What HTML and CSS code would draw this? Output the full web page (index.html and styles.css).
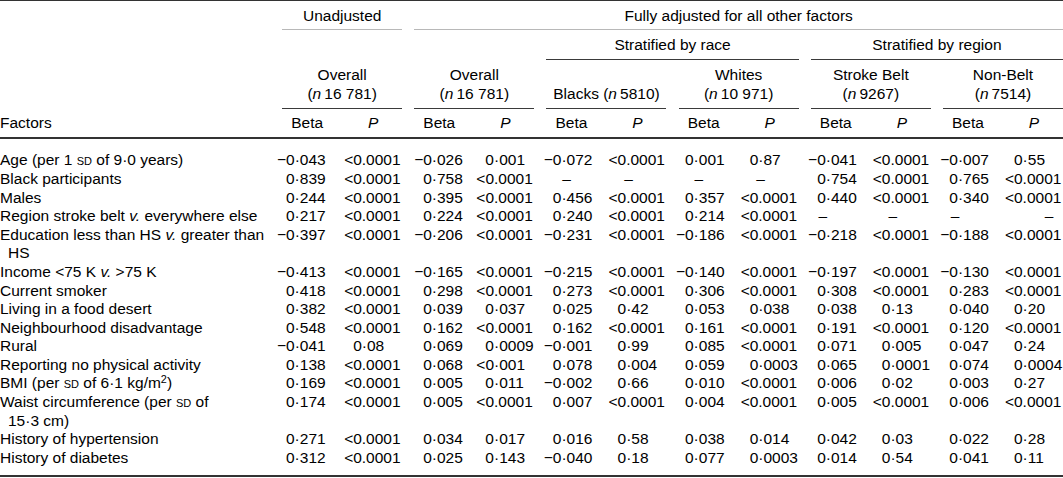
FILE: index.html
```html
<!DOCTYPE html>
<html lang="en">
<head>
<meta charset="utf-8">
<title>Factors table</title>
<link rel="stylesheet" href="styles.css">
</head>
<body>
<table class="tbl">
  <colgroup>
    <col class="c-f">
    <col class="c-b"><col class="c-p">
    <col class="c-b"><col class="c-p">
    <col class="c-b"><col class="c-p">
    <col class="c-b"><col class="c-p">
    <col class="c-b"><col class="c-p">
    <col class="c-b"><col class="c-p">
  </colgroup>
  <thead>
    <tr class="h1">
      <th></th>
      <th colspan="2"><div class="rule">Unadjusted</div></th>
      <th colspan="10"><div class="rule">Fully adjusted for all other factors</div></th>
    </tr>
    <tr class="h2">
      <th></th>
      <th colspan="2"></th>
      <th colspan="2"></th>
      <th colspan="4"><div class="rule">Stratified by race</div></th>
      <th colspan="4"><div class="rule">Stratified by region</div></th>
    </tr>
    <tr class="h3">
      <th></th>
      <th colspan="2"><div class="rule">Overall<br>(<i>n</i>&#8201;16 781)</div></th>
      <th colspan="2"><div class="rule">Overall<br>(<i>n</i>&#8201;16 781)</div></th>
      <th colspan="2"><div class="rule">Blacks (<i>n</i>&#8201;5810)</div></th>
      <th colspan="2"><div class="rule">Whites<br>(<i>n</i>&#8201;10 971)</div></th>
      <th colspan="2"><div class="rule">Stroke Belt<br>(<i>n</i>&#8201;9267)</div></th>
      <th colspan="2"><div class="rule">Non-Belt<br>(<i>n</i>&#8201;7514)</div></th>
    </tr>
    <tr class="h4">
      <th class="hf">Factors</th>
      <th class="hb">Beta</th><th class="hp"><i>P</i></th>
      <th class="hb">Beta</th><th class="hp"><i>P</i></th>
      <th class="hb">Beta</th><th class="hp"><i>P</i></th>
      <th class="hb">Beta</th><th class="hp"><i>P</i></th>
      <th class="hb">Beta</th><th class="hp"><i>P</i></th>
      <th class="hb">Beta</th><th class="hp"><i>P</i></th>
    </tr>
  </thead>
  <tbody>
    <tr>
      <td class="f">Age (per 1 <span class="sc">sd</span> of 9·0 years)</td>
      <td class="b">−0·043</td><td class="p"><span class="i">&lt;0</span>.0001</td>
      <td class="b">−0·026</td><td class="p"><span class="i">0</span>·001</td>
      <td class="b">−0·072</td><td class="p"><span class="i">&lt;0</span>.0001</td>
      <td class="b">0·001</td><td class="p"><span class="i">0</span>·87</td>
      <td class="b">−0·041</td><td class="p"><span class="i">&lt;0</span>.0001</td>
      <td class="b">−0·007</td><td class="p"><span class="i">0</span>·55</td>
    </tr>
    <tr>
      <td class="f">Black participants</td>
      <td class="b">0·839</td><td class="p"><span class="i">&lt;0</span>.0001</td>
      <td class="b">0·758</td><td class="p"><span class="i">&lt;0</span>.0001</td>
      <td class="b na1">–</td><td class="p na1">–</td>
      <td class="b na1">–</td><td class="p na1">–</td>
      <td class="b">0·754</td><td class="p"><span class="i">&lt;0</span>.0001</td>
      <td class="b">0·765</td><td class="p"><span class="i">&lt;0</span>.0001</td>
    </tr>
    <tr>
      <td class="f">Males</td>
      <td class="b">0·244</td><td class="p"><span class="i">&lt;0</span>.0001</td>
      <td class="b">0·395</td><td class="p"><span class="i">&lt;0</span>.0001</td>
      <td class="b">0·456</td><td class="p"><span class="i">&lt;0</span>.0001</td>
      <td class="b">0·357</td><td class="p"><span class="i">&lt;0</span>.0001</td>
      <td class="b">0·440</td><td class="p"><span class="i">&lt;0</span>.0001</td>
      <td class="b">0·340</td><td class="p"><span class="i">&lt;0</span>.0001</td>
    </tr>
    <tr>
      <td class="f">Region stroke belt <i>v.</i> everywhere else</td>
      <td class="b">0·217</td><td class="p"><span class="i">&lt;0</span>.0001</td>
      <td class="b">0·224</td><td class="p"><span class="i">&lt;0</span>.0001</td>
      <td class="b">0·240</td><td class="p"><span class="i">&lt;0</span>.0001</td>
      <td class="b">0·214</td><td class="p"><span class="i">&lt;0</span>.0001</td>
      <td class="b na2">–</td><td class="p na1">–</td>
      <td class="b na2">–</td><td class="p na2">–</td>
    </tr>
    <tr>
      <td class="f">Education less than HS <i>v.</i> greater than<br>HS</td>
      <td class="b">−0·397</td><td class="p"><span class="i">&lt;0</span>.0001</td>
      <td class="b">−0·206</td><td class="p"><span class="i">&lt;0</span>.0001</td>
      <td class="b">−0·231</td><td class="p"><span class="i">&lt;0</span>.0001</td>
      <td class="b">−0·186</td><td class="p"><span class="i">&lt;0</span>.0001</td>
      <td class="b">−0·218</td><td class="p"><span class="i">&lt;0</span>.0001</td>
      <td class="b">−0·188</td><td class="p"><span class="i">&lt;0</span>.0001</td>
    </tr>
    <tr>
      <td class="f">Income &lt;75 K <i>v.</i> &gt;75 K</td>
      <td class="b">−0·413</td><td class="p"><span class="i">&lt;0</span>.0001</td>
      <td class="b">−0·165</td><td class="p"><span class="i">&lt;0</span>.0001</td>
      <td class="b">−0·215</td><td class="p"><span class="i">&lt;0</span>.0001</td>
      <td class="b">−0·140</td><td class="p"><span class="i">&lt;0</span>.0001</td>
      <td class="b">−0·197</td><td class="p"><span class="i">&lt;0</span>.0001</td>
      <td class="b">−0·130</td><td class="p"><span class="i">&lt;0</span>.0001</td>
    </tr>
    <tr>
      <td class="f">Current smoker</td>
      <td class="b">0·418</td><td class="p"><span class="i">&lt;0</span>.0001</td>
      <td class="b">0·298</td><td class="p"><span class="i">&lt;0</span>.0001</td>
      <td class="b">0·273</td><td class="p"><span class="i">&lt;0</span>.0001</td>
      <td class="b">0·306</td><td class="p"><span class="i">&lt;0</span>.0001</td>
      <td class="b">0·308</td><td class="p"><span class="i">&lt;0</span>.0001</td>
      <td class="b">0·283</td><td class="p"><span class="i">&lt;0</span>.0001</td>
    </tr>
    <tr>
      <td class="f">Living in a food desert</td>
      <td class="b">0·382</td><td class="p"><span class="i">&lt;0</span>.0001</td>
      <td class="b">0·039</td><td class="p"><span class="i">0</span>·037</td>
      <td class="b">0·025</td><td class="p"><span class="i">0</span>·42</td>
      <td class="b">0·053</td><td class="p"><span class="i">0</span>·038</td>
      <td class="b">0·038</td><td class="p"><span class="i">0</span>·13</td>
      <td class="b">0·040</td><td class="p"><span class="i">0</span>·20</td>
    </tr>
    <tr>
      <td class="f">Neighbourhood disadvantage</td>
      <td class="b">0·548</td><td class="p"><span class="i">&lt;0</span>.0001</td>
      <td class="b">0·162</td><td class="p"><span class="i">&lt;0</span>.0001</td>
      <td class="b">0·162</td><td class="p"><span class="i">&lt;0</span>.0001</td>
      <td class="b">0·161</td><td class="p"><span class="i">&lt;0</span>.0001</td>
      <td class="b">0·191</td><td class="p"><span class="i">&lt;0</span>.0001</td>
      <td class="b">0·120</td><td class="p"><span class="i">&lt;0</span>.0001</td>
    </tr>
    <tr>
      <td class="f">Rural</td>
      <td class="b">−0·041</td><td class="p"><span class="i">0</span>·08</td>
      <td class="b">0·069</td><td class="p"><span class="i">0</span>·0009</td>
      <td class="b">−0·001</td><td class="p"><span class="i">0</span>·99</td>
      <td class="b">0·085</td><td class="p"><span class="i">&lt;0</span>.0001</td>
      <td class="b">0·071</td><td class="p"><span class="i">0</span>·005</td>
      <td class="b">0·047</td><td class="p"><span class="i">0</span>·24</td>
    </tr>
    <tr>
      <td class="f">Reporting no physical activity</td>
      <td class="b">0·138</td><td class="p"><span class="i">&lt;0</span>.0001</td>
      <td class="b">0·068</td><td class="p"><span class="i">&lt;0</span>·001</td>
      <td class="b">0·078</td><td class="p"><span class="i">0</span>·004</td>
      <td class="b">0·059</td><td class="p"><span class="i">0</span>·0003</td>
      <td class="b">0·065</td><td class="p"><span class="i">0</span>·0001</td>
      <td class="b">0·074</td><td class="p"><span class="i">0</span>·0004</td>
    </tr>
    <tr>
      <td class="f">BMI (per <span class="sc">sd</span> of 6·1 kg/m<sup>2</sup>)</td>
      <td class="b">0·169</td><td class="p"><span class="i">&lt;0</span>.0001</td>
      <td class="b">0·005</td><td class="p"><span class="i">0</span>·011</td>
      <td class="b">−0·002</td><td class="p"><span class="i">0</span>·66</td>
      <td class="b">0·010</td><td class="p"><span class="i">&lt;0</span>.0001</td>
      <td class="b">0·006</td><td class="p"><span class="i">0</span>·02</td>
      <td class="b">0·003</td><td class="p"><span class="i">0</span>·27</td>
    </tr>
    <tr>
      <td class="f">Waist circumference (per <span class="sc">sd</span> of<br>15·3&nbsp;cm)</td>
      <td class="b">0·174</td><td class="p"><span class="i">&lt;0</span>.0001</td>
      <td class="b">0·005</td><td class="p"><span class="i">&lt;0</span>.0001</td>
      <td class="b">0·007</td><td class="p"><span class="i">&lt;0</span>.0001</td>
      <td class="b">0·004</td><td class="p"><span class="i">&lt;0</span>.0001</td>
      <td class="b">0·005</td><td class="p"><span class="i">&lt;0</span>.0001</td>
      <td class="b">0·006</td><td class="p"><span class="i">&lt;0</span>.0001</td>
    </tr>
    <tr>
      <td class="f">History of hypertension</td>
      <td class="b">0·271</td><td class="p"><span class="i">&lt;0</span>.0001</td>
      <td class="b">0·034</td><td class="p"><span class="i">0</span>·017</td>
      <td class="b">0·016</td><td class="p"><span class="i">0</span>·58</td>
      <td class="b">0·038</td><td class="p"><span class="i">0</span>·014</td>
      <td class="b">0·042</td><td class="p"><span class="i">0</span>·03</td>
      <td class="b">0·022</td><td class="p"><span class="i">0</span>·28</td>
    </tr>
    <tr>
      <td class="f">History of diabetes</td>
      <td class="b">0·312</td><td class="p"><span class="i">&lt;0</span>.0001</td>
      <td class="b">0·025</td><td class="p"><span class="i">0</span>·143</td>
      <td class="b">−0·040</td><td class="p"><span class="i">0</span>·18</td>
      <td class="b">0·077</td><td class="p"><span class="i">0</span>·0003</td>
      <td class="b">0·014</td><td class="p"><span class="i">0</span>·54</td>
      <td class="b">0·041</td><td class="p"><span class="i">0</span>·11</td>
    </tr>
  </tbody>
</table>
</body>
</html>
```

FILE: styles.css
```css
html, body {
  margin: 0;
  padding: 0;
  background: #ffffff;
}

body {
  font-family: "Liberation Sans", Arial, Helvetica, sans-serif;
  font-size: 15.5px;
  line-height: 18.6px;
  color: #000000;
}

.tbl {
  width: 1063px;
  table-layout: fixed;
  border-collapse: separate;
  border-spacing: 0;
  border-top: 1px solid #333333;
  border-bottom: 2px solid #333333;
}

.c-f { width: 270px; }
.c-b { width: 66.17px; }
.c-p { width: 66px; }

th, td {
  padding: 0;
  font-weight: normal;
  vertical-align: top;
}

thead th {
  vertical-align: bottom;
  text-align: center;
}

.rule {
  margin-left: 12.17px;
  border-bottom: 1px solid #3a3a3a;
}

.h1 .rule {
  border-bottom-color: #b8b8b8;
  padding: 6px 0 3.5px;
}

.h2 .rule {
  padding: 6.3px 0 4px;
}

.h3 .rule {
  padding: 6.4px 0 4px;
}

.h4 th {
  border-bottom: 2px solid #333333;
  padding: 5.8px 0 4px;
}

.h4 .hf {
  text-align: left;
}

.h4 .hb {
  text-align: left;
  padding-left: 21.2px;
}

.h4 .hp {
  text-align: center;
  padding-left: 8px;
}

.f {
  text-align: left;
  padding-left: 8px;
  text-indent: -8px;
}

.b {
  text-align: right;
  padding-right: 8px;
  white-space: nowrap;
}

tbody td.b:nth-child(2) {
  padding-right: 10.5px;
}

tbody td.b:nth-child(4) {
  padding-right: 5.5px;
}

.p {
  text-align: left;
  padding-left: 8px;
  white-space: nowrap;
}

.p .i {
  display: inline-block;
  width: 1.14em;
  text-align: right;
}

.b.na1 {
  text-align: left;
  padding: 0 0 0 27.9px;
}

.b.na2 {
  text-align: left;
  padding: 0 0 0 19.9px;
}

.p.na1 {
  padding-left: 23.7px;
}

.p.na2 {
  padding-left: 47.7px;
}

tbody tr:first-child td {
  padding-top: 12.4px;
}

tbody tr:last-child td {
  padding-bottom: 7.4px;
}

.sc {
  font-variant: small-caps;
}

sup {
  font-size: 0.7em;
  line-height: 0;
  vertical-align: 0.45em;
}
```
